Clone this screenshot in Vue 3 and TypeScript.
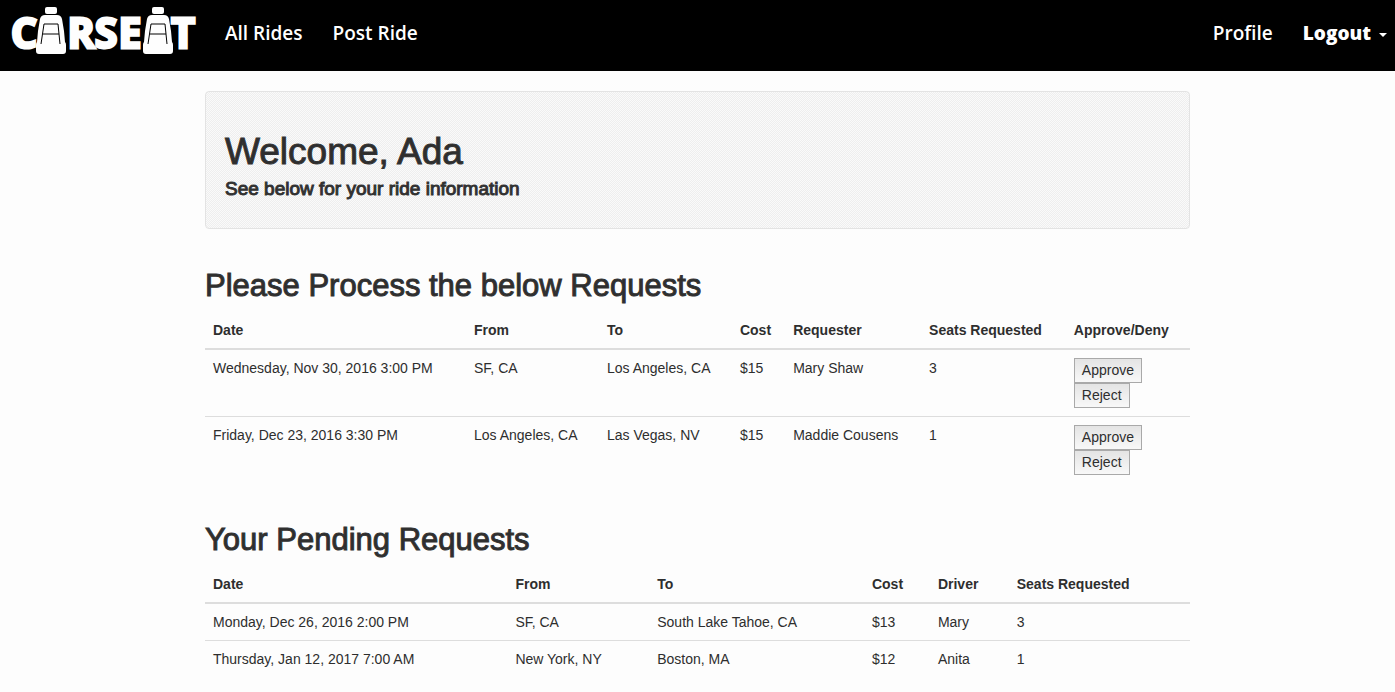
<script setup lang="ts">
interface Ride {
  date: string
  from: string
  to: string
  cost: string
  person: string
  seats: number
}

const incoming: Ride[] = [
  { date: 'Wednesday, Nov 30, 2016 3:00 PM', from: 'SF, CA', to: 'Los Angeles, CA', cost: '$15', person: 'Mary Shaw', seats: 3 },
  { date: 'Friday, Dec 23, 2016 3:30 PM', from: 'Los Angeles, CA', to: 'Las Vegas, NV', cost: '$15', person: 'Maddie Cousens', seats: 1 },
]

const pending: Ride[] = [
  { date: 'Monday, Dec 26, 2016 2:00 PM', from: 'SF, CA', to: 'South Lake Tahoe, CA', cost: '$13', person: 'Mary', seats: 3 },
  { date: 'Thursday, Jan 12, 2017 7:00 AM', from: 'New York, NY', to: 'Boston, MA', cost: '$12', person: 'Anita', seats: 1 },
]
</script>

<template>
  <div class="page">
    <nav class="navbar">
      <a class="brand" href="#" aria-label="Carseat home">
        <svg class="logo" width="210" height="60" viewBox="0 0 210 60">
          <defs>
            <g id="seat">
              <rect x="9" y="0" width="12" height="7" rx="2" />
              <path d="M9 8H21Q25 8 26 12L28 24L29 35Q30 36 30 38V44Q30 47 27 47H3Q0 47 0 44V38Q0 36 1 35L2 24L4 12Q5 8 9 8Z" />
              <path class="seam" d="M5 37L8 17H22L24 37M7 27H23" />
            </g>
          </defs>
          <g class="letters">
            <text x="24" y="48">C</text>
            <text x="81" y="48">R</text>
            <text x="106" y="48">S</text>
            <text x="130" y="48">E</text>
            <text x="183" y="48">T</text>
          </g>
          <g class="seats">
            <use href="#seat" x="36" y="7" />
            <use href="#seat" x="143" y="7" />
          </g>
        </svg>
      </a>
      <a class="link" href="#">All Rides</a>
      <a class="link" href="#">Post Ride</a>
      <a class="link push" href="#">Profile</a>
      <a class="link logout" href="#">Logout<span class="caret"></span></a>
    </nav>

    <main class="container">
      <header class="well">
        <h1>Welcome, Ada</h1>
        <h4>See below for your ride information</h4>
      </header>

      <section>
        <h2>Please Process the below Requests</h2>
        <table class="incoming">
          <thead>
            <tr>
              <th class="c1">Date</th>
              <th class="c2">From</th>
              <th class="c3">To</th>
              <th class="c4">Cost</th>
              <th class="c5">Requester</th>
              <th class="c6">Seats Requested</th>
              <th>Approve/Deny</th>
            </tr>
          </thead>
          <tbody>
            <tr v-for="r in incoming" :key="r.date">
              <td>{{ r.date }}</td>
              <td>{{ r.from }}</td>
              <td>{{ r.to }}</td>
              <td>{{ r.cost }}</td>
              <td>{{ r.person }}</td>
              <td>{{ r.seats }}</td>
              <td>
                <div class="actions">
                  <button type="button">Approve</button>
                  <button type="button">Reject</button>
                </div>
              </td>
            </tr>
          </tbody>
        </table>
      </section>

      <section>
        <h2>Your Pending Requests</h2>
        <table class="pending">
          <thead>
            <tr>
              <th class="c1">Date</th>
              <th class="c2">From</th>
              <th class="c3">To</th>
              <th class="c4">Cost</th>
              <th class="c5">Driver</th>
              <th>Seats Requested</th>
            </tr>
          </thead>
          <tbody>
            <tr v-for="r in pending" :key="r.date">
              <td>{{ r.date }}</td>
              <td>{{ r.from }}</td>
              <td>{{ r.to }}</td>
              <td>{{ r.cost }}</td>
              <td>{{ r.person }}</td>
              <td>{{ r.seats }}</td>
            </tr>
          </tbody>
        </table>
      </section>
    </main>
  </div>
</template>

<style>
body {
  margin: 0;
  background: #fdfdfd;
}
</style>

<style scoped>
.page {
  font: 14px/20px "Liberation Sans", Arial, sans-serif;
  color: #2e2e2e;
}

.navbar {
  display: flex;
  align-items: flex-start;
  min-height: 71px;
  padding-right: 8px;
  background: #000;
}

.brand {
  display: flex;
}

.logo {
  display: block;
  fill: #fefefe;
}

.letters {
  font-family: "Open Sans", sans-serif;
  font-size: 41px;
  font-weight: 700;
  text-anchor: middle;
  stroke: #fefefe;
  stroke-width: 3px;
}

.seam {
  fill: none;
  stroke: #000;
  stroke-width: 1px;
}

.link {
  display: flex;
  align-items: center;
  padding: 18px 15px;
  font: 600 19px/30px "Open Sans", sans-serif;
  color: #fff;
  text-decoration: none;
}

.push {
  margin-left: auto;
}

.logout {
  padding-right: 0;
  font-weight: 800;
}

.caret {
  margin: 4px 0 0 8px;
  border-top: 4px solid #fff;
  border-right: 4px solid transparent;
  border-left: 4px solid transparent;
}

.container {
  max-width: 985px;
  margin: 20px auto 0;
}

.well {
  padding: 19px;
  border: 1px solid #e3e3e3;
  border-radius: 4px;
  background: repeating-conic-gradient(#eeeeee 0 25%, #fafafa 0 50%) 0 0 / 2px 2px;
}

h1,
h2,
h4 {
  margin: 0;
  font-weight: 400;
  -webkit-text-stroke: 1px #333;
}

h1 {
  margin-top: 20px;
  font-size: 37px;
  line-height: 42px;
}

h4 {
  margin: 6px 0 10px;
  font-size: 19px;
  line-height: 20px;
}

h2 {
  margin: 40px 0 10px;
  font-size: 31px;
  line-height: 33px;
}

table {
  width: 100%;
  border-collapse: collapse;
  table-layout: fixed;
}

th {
  box-sizing: border-box;
  padding: 8px;
  border-bottom: 2px solid #ddd;
  text-align: left;
  white-space: nowrap;
}

td {
  padding: 8px;
  border-top: 1px solid #ddd;
  vertical-align: top;
}

.incoming .c1 { width: 26.5%; }
.incoming .c2 { width: 13.5%; }
.incoming .c3 { width: 13.5%; }
.incoming .c4 { width: 5.4%; }
.incoming .c5 { width: 13.8%; }
.incoming .c6 { width: 14.7%; }

.pending .c1 { width: 30.7%; }
.pending .c2 { width: 14.4%; }
.pending .c3 { width: 21.8%; }
.pending .c4 { width: 6.7%; }
.pending .c5 { width: 8%; }

.actions {
  display: flex;
  flex-direction: column;
  align-items: flex-start;
}

button {
  height: 25px;
  padding: 0 7px 2px;
  border: 1px solid #a9a9a9;
  border-radius: 0;
  background: linear-gradient(#e4e4e4, #f8f8f8);
  font: inherit;
  color: #2e2e2e;
}
</style>
